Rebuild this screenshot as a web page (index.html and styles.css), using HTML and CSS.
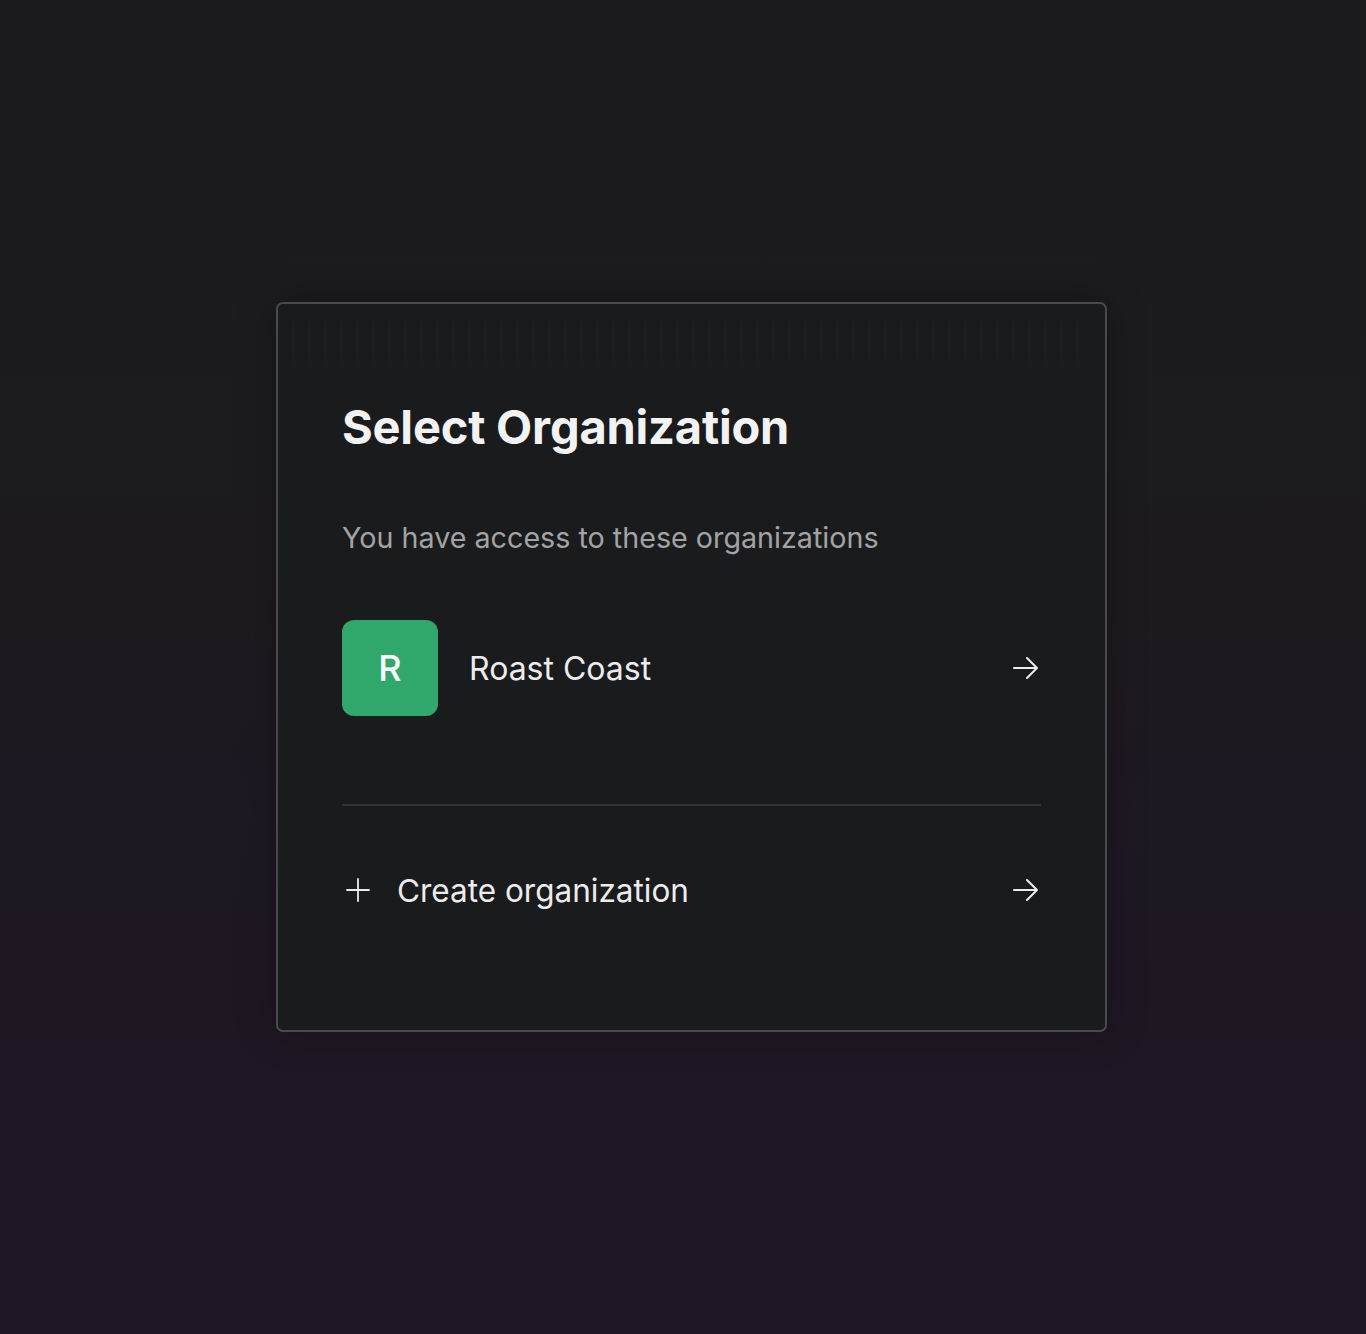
FILE: index.html
```html
<!DOCTYPE html>
<html lang="en">
<head>
  <meta charset="UTF-8">
  <title>Select Organization</title>
  <link rel="stylesheet" href="styles.css">
</head>
<body>
  <div class="page">
    <div class="card">
      <div class="card-pattern"></div>
      <h1 class="title">Select Organization</h1>
      <p class="subtitle">You have access to these organizations</p>

      <div class="org-list">
        <a class="org-row" href="#">
          <span class="avatar">R</span>
          <span class="org-name">Roast Coast</span>
          <svg class="arrow" width="26" height="24" viewBox="0 0 26 24" fill="none" stroke="currentColor" stroke-width="2" stroke-linecap="round" stroke-linejoin="round">
            <path d="M1 12h23M14 2l10 10-10 10"/>
          </svg>
        </a>
      </div>

      <div class="divider"></div>

      <a class="create-row" href="#">
        <svg class="plus" width="24" height="24" viewBox="0 0 24 24" fill="none" stroke="currentColor" stroke-width="1.8" stroke-linecap="round">
          <path d="M12 1v22M1 12h22"/>
        </svg>
        <span class="create-label">Create organization</span>
        <svg class="arrow" width="26" height="24" viewBox="0 0 26 24" fill="none" stroke="currentColor" stroke-width="2" stroke-linecap="round" stroke-linejoin="round">
          <path d="M1 12h23M14 2l10 10-10 10"/>
        </svg>
      </a>
    </div>
  </div>
</body>
</html>
```

FILE: styles.css
```css
* { box-sizing: border-box; }
html, body {
  margin: 0;
  height: 100%;
}
body {
  font-family: Inter, "Noto Sans", Arial, sans-serif;
  background: linear-gradient(180deg, #1b1b1d 0%, #1c1b1e 35%, #1e1822 65%, #1f1726 100%);
  color: #ececec;
}
.page {
  min-height: 100%;
  display: flex;
  align-items: center;
  justify-content: center;
  padding-left: 17px;
}
.card {
  width: 831px;
  background: #1a1b1d;
  border: 2px solid #4a4a4d;
  border-radius: 7px;
  padding: 16px 64px 120px;
  box-shadow: 0 0 40px rgba(0, 0, 0, 0.25);
}
.card-pattern {
  height: 48px;
  margin: 0 -50px;
  background: repeating-linear-gradient(90deg, rgba(12, 48, 38, 0.3) 0 3px, transparent 3px 16px);
  -webkit-mask-image: linear-gradient(180deg, rgba(0,0,0,0.6), #000 20%, #000 75%, rgba(0,0,0,0.4));
  mask-image: linear-gradient(180deg, rgba(0,0,0,0.6), #000 20%, #000 75%, rgba(0,0,0,0.4));
}
.title {
  margin: 31px 0 0;
  font-size: 47px;
  line-height: 1.2;
  font-weight: 700;
  letter-spacing: -0.2px;
  color: #f2f2f3;
}
.subtitle {
  margin: 63px 0 0;
  font-size: 28.7px;
  line-height: 40px;
  color: #a3a3a5;
}
.org-list {
  margin-top: 62px;
}
.org-row, .create-row {
  display: flex;
  align-items: center;
  color: #ececec;
  text-decoration: none;
}
.avatar {
  width: 96px;
  height: 96px;
  border-radius: 12px;
  background: #30a86b;
  color: #fff;
  display: flex;
  align-items: center;
  justify-content: center;
  font-size: 36px;
  font-weight: 500;
}
.org-name {
  margin-left: 31px;
  font-size: 32px;
  flex: 1;
}
.arrow {
  margin-right: 2px;
  color: #ececec;
}
.divider {
  margin-top: 88px;
  height: 2px;
  background: #333336;
}
.create-row {
  margin-top: 64px;
  height: 40px;
}
.plus {
  margin-left: 4px;
  color: #ececec;
}
.create-label {
  margin-left: 27px;
  font-size: 31.5px;
  flex: 1;
}
```
